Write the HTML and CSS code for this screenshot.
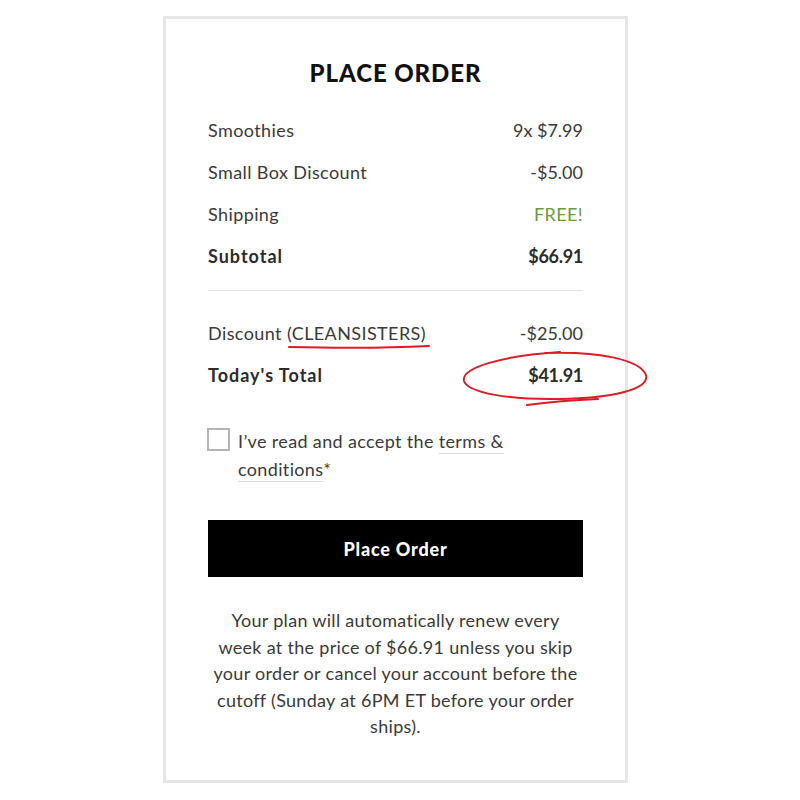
FILE: index.html
```html
<!DOCTYPE html>
<html>
<head>
<meta charset="utf-8">
<link rel="stylesheet" href="styles.css">
</head>
<body>
<div class="card">
  <h1 class="title">PLACE ORDER</h1>
  <div class="rows">
    <div class="row"><span>Smoothies</span><span class="num">9x $7.99</span></div>
    <div class="row"><span>Small Box Discount</span><span class="num">-$5.00</span></div>
    <div class="row"><span>Shipping</span><span class="free">FREE!</span></div>
    <div class="row bold"><span class="label">Subtotal</span><span class="num">$66.91</span></div>
  </div>
  <div class="divider"></div>
  <div class="rows">
    <div class="row"><span>Discount (CLEANSISTERS)</span><span class="num">-$25.00</span></div>
    <div class="row bold"><span class="label">Today's Total</span><span class="num">$41.91</span></div>
  </div>
  <label class="accept">
    <span class="box"></span>
    <span class="accept-text">I’ve read and accept the <span class="link">terms &amp;</span><br><span class="link">conditions</span>*</span>
  </label>
  <button class="btn">Place Order</button>
  <p class="note">Your plan will automatically renew every week at the price of $66.91 unless you skip your order or cancel your account before the cutoff (Sunday at 6PM ET before your order ships).</p>
</div>
<svg class="marks" width="800" height="800" viewBox="0 0 800 800">
  <path d="M289 347 C 330 348, 390 348, 429 346" fill="none" stroke="#e01b24" stroke-width="2" stroke-linecap="round"/>
  <path d="M 545 353 C 600 351, 640 360, 646 375 C 650 390, 610 398, 560 399 C 510 400, 468 393, 464 381 C 461 368, 500 356, 560 352" fill="none" stroke="#e01b24" stroke-width="2" stroke-linecap="round"/>
  <path d="M 527 405 C 550 402, 575 400, 598 399" fill="none" stroke="#e01b24" stroke-width="2" stroke-linecap="round"/>
</svg>
</body>
</html>
```
FILE: styles.css
```css
html, body {
  margin: 0;
  padding: 0;
  background: #ffffff;
}
body {
  font-family: "Lato", "Liberation Sans", sans-serif;
  color: #333333;
  width: 800px;
  height: 800px;
  position: relative;
}
.card {
  box-sizing: border-box;
  width: 465px;
  height: 767px;
  margin-left: 163px;
  margin-top: 16px;
  display: inline-block;
  vertical-align: top;
  border: 3px solid #e6e6e6;
  padding: 38px 42px 0 42px;
}
.title {
  margin: 0;
  font-size: 24px;
  line-height: 32px;
  font-weight: 900;
  color: #111;
  text-align: center;
  letter-spacing: 0.9px;
}
.rows {
  display: flex;
  flex-direction: column;
}
.rows:first-of-type {
  margin-top: 20px;
}
.row {
  display: flex;
  justify-content: space-between;
  align-items: center;
  height: 42px;
  font-size: 18px;
  letter-spacing: 0.4px;
  color: #3a3a3a;
}
.row .num {
  letter-spacing: 0;
}
.row.bold {
  font-weight: 700;
  color: #2c2c2c;
  letter-spacing: 0;
}
.row.bold .label {
  letter-spacing: 1px;
}
.row.bold .num {
  letter-spacing: -0.3px;
}
.free {
  color: #6a9a3c;
}
.divider {
  height: 1px;
  background: #e4e4e8;
  margin: 13px 0 21px 0;
}
.accept {
  display: flex;
  gap: 8px;
  margin-top: 31px;
  font-size: 18px;
  letter-spacing: 0.35px;
  line-height: 28px;
  color: #3a3a3a;
}
.box {
  flex: none;
  box-sizing: border-box;
  width: 23px;
  height: 23px;
  border: 2px solid #b4b4b4;
  margin-top: 1px;
  margin-left: -1px;
}
.link {
  border-bottom: 1px solid #dcdcdc;
  padding-bottom: 1px;
}
.btn {
  display: block;
  width: 100%;
  height: 57px;
  margin-top: 37px;
  border: 0;
  background: #000;
  color: #fff;
  font-family: "Lato", "Liberation Sans", sans-serif;
  font-size: 18px;
  font-weight: 900;
  letter-spacing: 0.8px;
}
.note {
  margin: 30px 0 0 0;
  text-align: center;
  font-size: 18px;
  letter-spacing: 0.3px;
  line-height: 26.5px;
  color: #3a3a3a;
}
.marks {
  position: absolute;
  left: 0;
  top: 0;
  pointer-events: none;
}
```
